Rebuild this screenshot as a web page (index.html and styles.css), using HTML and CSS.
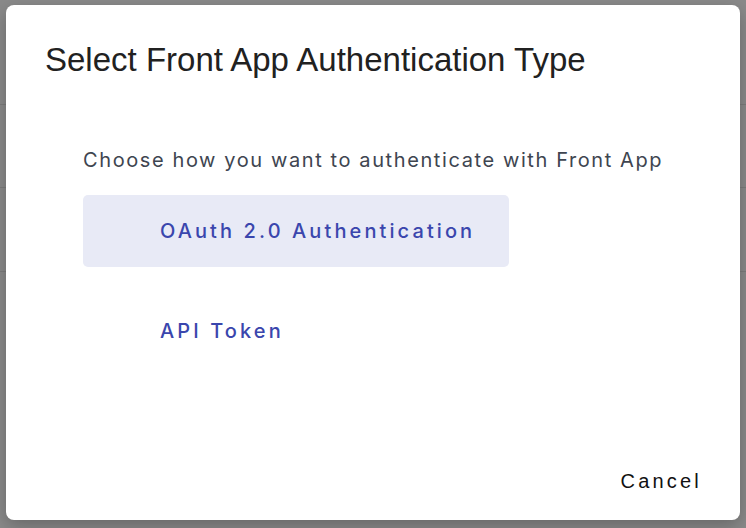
FILE: index.html
```html
<!DOCTYPE html>
<html>
<head>
<meta charset="utf-8">
<link rel="stylesheet" href="styles.css">
</head>
<body>
<div class="page">
  <div class="row"></div>
  <div class="row r2"></div>
  <div class="row r3"></div>
  <div class="rest"></div>
</div>
<div class="dialog">
  <h2 class="title">Select Front App Authentication Type</h2>
  <div class="content">
    <p class="lead">Choose how you want to authenticate with Front App</p>
    <button class="option active">OAuth 2.0 Authentication</button>
    <button class="option">API Token</button>
  </div>
  <div class="actions">
    <button class="cancel">Cancel</button>
  </div>
</div>
</body>
</html>
```
FILE: styles.css
```css
html, body {
  margin: 0;
  padding: 0;
  width: 746px;
  height: 528px;
  overflow: hidden;
  background: #8a8a8a;
}
.page {
  display: flex;
  flex-direction: column;
  height: 528px;
}
.row {
  height: 104px;
  border-bottom: 1px solid #7c7c7c;
  flex: none;
}
.r2 { height: 82px; }
.r3 { height: 83px; }
.rest { flex: 1; }
.dialog {
  position: absolute;
  left: 6px;
  top: 5px;
  width: 734px;
  height: 515px;
  background: #fff;
  border-radius: 8px;
  box-shadow: 0 6px 18px rgba(0,0,0,0.25);
  display: flex;
  flex-direction: column;
  box-sizing: border-box;
}
.title {
  margin: 0;
  padding: 35px 0 0 39px;
  font-family: "Liberation Sans", Arial, sans-serif;
  font-weight: 400;
  font-size: 33px;
  line-height: 40px;
  color: #212121;
}
.content {
  padding: 66px 0 0 77px;
  display: flex;
  flex-direction: column;
  align-items: flex-start;
  gap: 28px;
}
.lead {
  margin: 0 0 -7px 0;
  font-family: Inter, sans-serif;
  font-size: 20px;
  line-height: 28px;
  letter-spacing: 1.6px;
  color: #3e4550;
}
.option {
  width: 426px;
  height: 72px;
  border: none;
  border-radius: 5px;
  background: transparent;
  text-align: left;
  padding: 0 0 0 77px;
  font-family: Inter, sans-serif;
  font-weight: 500;
  font-size: 20px;
  letter-spacing: 3.1px;
  color: #3a46ad;
}
.option.active {
  background: #e8eaf6;
}
.actions {
  margin-top: auto;
  display: flex;
  justify-content: flex-end;
  padding: 0 38px 19px 0;
}
.cancel {
  border: none;
  background: transparent;
  padding: 0;
  height: 40px;
  font-family: "Liberation Sans", Arial, sans-serif;
  font-size: 20px;
  letter-spacing: 3.2px;
  color: #111;
}
```
